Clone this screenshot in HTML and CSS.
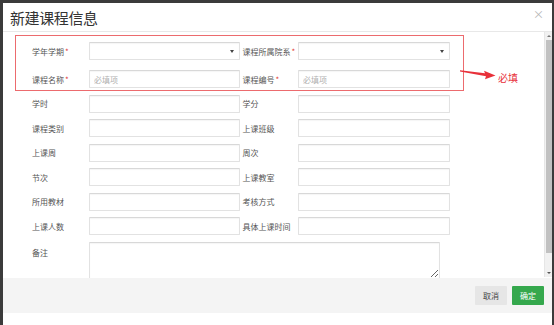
FILE: index.html
```html
<!DOCTYPE html>
<html lang="zh-CN">
  <head>
    <meta charset="UTF-8" />
    <title>新建课程信息</title>
    <link rel="stylesheet" href="styles.css">
  </head>
  <body>
    <div class="dialog">
      <div class="dialog-header">
        <h3 class="dialog-title">新建课程信息</h3>
        <span class="dialog-close">×</span>
      </div>
      <div class="dialog-body">
        <div class="form-area">
          <div class="form-row first">
            <label>学年学期<em>*</em></label>
            <div class="select"><span class="caret"></span></div>
            <label class="label-right">课程所属院系<em>*</em></label>
            <div class="select"><span class="caret"></span></div>
          </div>
          <div class="form-row">
            <label>课程名称<em>*</em></label>
            <input type="text" placeholder="必填项" />
            <label class="label-right">课程编号<em>*</em></label>
            <input type="text" placeholder="必填项" />
          </div>
          <div class="form-row">
            <label>学时</label>
            <input type="text" />
            <label class="label-right">学分</label>
            <input type="text" />
          </div>
          <div class="form-row">
            <label>课程类别</label>
            <input type="text" />
            <label class="label-right">上课班级</label>
            <input type="text" />
          </div>
          <div class="form-row">
            <label>上课周</label>
            <input type="text" />
            <label class="label-right">周次</label>
            <input type="text" />
          </div>
          <div class="form-row">
            <label>节次</label>
            <input type="text" />
            <label class="label-right">上课教室</label>
            <input type="text" />
          </div>
          <div class="form-row">
            <label>所用教材</label>
            <input type="text" />
            <label class="label-right">考核方式</label>
            <input type="text" />
          </div>
          <div class="form-row">
            <label>上课人数</label>
            <input type="text" />
            <label class="label-right">具体上课时间</label>
            <input type="text" />
          </div>
          <div class="form-row note-row">
            <label>备注</label>
            <textarea></textarea>
          </div>
        </div>
        <div class="scrollbar">
          <span class="arrow-up"></span>
          <span class="thumb"></span>
          <span class="arrow-down"></span>
        </div>
      </div>
      <div class="dialog-footer">
        <button class="btn btn-cancel">取消</button>
        <button class="btn btn-ok">确定</button>
      </div>

      <!-- annotation drawn over the form -->
      <div class="mark-box"></div>
      <svg class="mark-arrow" width="44" height="18" viewBox="0 0 44 18">
        <polygon points="4,6.3 29,9.3 28,6.8 39.5,11.6 29,15.2 30,12.2 4,7.6" fill="#e8313a" />
      </svg>
      <span class="mark-text">必填</span>
    </div>
  </body>
</html>
```

FILE: styles.css
```css
body {
  margin: 0;
  padding: 3px 2px 0 3px;
  background: #3b3b3b;
  font-family: "Noto Sans CJK SC", "Noto Sans", sans-serif;
  color: #555;
  height: 325px;
  box-sizing: border-box;
  overflow: hidden;
}
.dialog {
  position: relative;
  background: #fff;
  height: 322px;
  display: flex;
  flex-direction: column;
}
.dialog-header {
  height: 28px;
  border-bottom: 1px solid #e8e8e8;
  display: flex;
  align-items: center;
  justify-content: space-between;
  padding: 0 8px 0 7px;
}
.dialog-title {
  margin: 0;
  font-size: 15px;
  font-weight: normal;
  color: #333;
  line-height: 1;
  letter-spacing: -0.4px;
}
.dialog-close {
  font-size: 11px;
  color: #b5b5b5;
  margin-top: -6px;
}
.dialog-body {
  height: 246px;
  display: flex;
  overflow: hidden;
}
.form-area {
  flex: 1;
  padding: 10px 0 0 29px;
}
.form-row {
  display: grid;
  grid-template-columns: 57px 151px 58px 152px;
  align-items: center;
  height: 18px;
  margin-bottom: 6.5px;
}
.form-row.first {
  margin-bottom: 10px;
}
.form-row label {
  font-size: 8px;
  color: #555;
  white-space: nowrap;
}
.form-row label em {
  font-style: normal;
  color: #e23b3b;
  margin-left: 1px;
}
.form-row .label-right {
  padding-left: 2.5px;
}
.form-row input,
.form-row .select,
.form-row textarea {
  box-sizing: border-box;
  height: 18px;
  margin: 0;
  border: 1px solid #e2e2e2;
  border-top-color: #d8d8d8;
  border-radius: 1px;
  background: #fff;
  box-shadow: inset 0 1px 1px rgba(0, 0, 0, 0.04);
  font-family: inherit;
  font-size: 8px;
  padding: 0 4px;
  outline: none;
}
.form-row input::placeholder {
  color: #b0b0b0;
}
.form-row .select {
  position: relative;
}
.caret {
  position: absolute;
  right: 5px;
  top: 6.5px;
  border-left: 2.5px solid transparent;
  border-right: 2.5px solid transparent;
  border-top: 3px solid #444;
}
.note-row {
  align-items: start;
  height: auto;
}
.note-row label {
  padding-top: 5px;
}
.form-row textarea {
  grid-column: 2 / 5;
  width: 351px;
  height: 37px;
}
.scrollbar {
  width: 7px;
  background: #f1f1f1;
  border-left: 1px solid #e6e6e6;
  display: flex;
  flex-direction: column;
  align-items: center;
  height: 245px;
}
.arrow-up {
  margin-top: 3px;
  border-left: 2px solid transparent;
  border-right: 2px solid transparent;
  border-bottom: 2px solid #777;
}
.thumb {
  margin-top: 3px;
  width: 6px;
  height: 213px;
  background: #c1c1c1;
}
.arrow-down {
  margin-top: auto;
  margin-bottom: 3px;
  border-left: 2px solid transparent;
  border-right: 2px solid transparent;
  border-top: 2px solid #555;
}
.dialog-footer {
  height: 35px;
  background: #f4f4f4;
  display: flex;
  align-items: center;
  justify-content: flex-end;
  gap: 5px;
  padding-right: 8px;
}
.btn {
  width: 32px;
  height: 19px;
  border: none;
  border-radius: 1px;
  font-family: inherit;
  font-size: 8px;
  padding: 0;
}
.btn-cancel {
  background: #e6e6e6;
  color: #444;
}
.btn-ok {
  background: #35a84d;
  color: #fff;
}
.mark-box {
  position: absolute;
  left: 12px;
  top: 32px;
  width: 447px;
  height: 54px;
  border: 1px solid #ec6b6e;
}
.mark-arrow {
  position: absolute;
  left: 453px;
  top: 61px;
}
.mark-text {
  position: absolute;
  left: 495px;
  top: 67px;
  font-size: 10px;
  color: #e8313a;
}
```
